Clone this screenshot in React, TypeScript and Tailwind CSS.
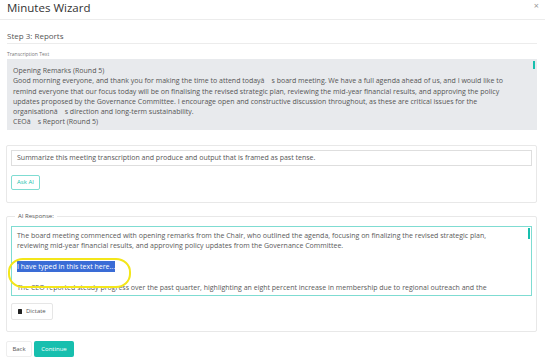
import React from "react";

const teal = "#17bfae";

const transcription = [
  "Opening Remarks (Round 5)",
  "Good morning everyone, and thank you for making the time to attend todayâ\u2003s board meeting. We have a full agenda ahead of us, and I would like to",
  "remind everyone that our focus today will be on finalising the revised strategic plan, reviewing the mid-year financial results, and approving the policy",
  "updates proposed by the Governance Committee. I encourage open and constructive discussion throughout, as these are critical issues for the",
  "organisationâ\u2003s direction and long-term sustainability.",
  "CEOâ\u2003s Report (Round 5)",
  "Thank you, Chair. Over the past quarter we have continued to make steady progress across our key priorities, and I am pleased to report that membership",
];

function Line({ children }: { children: React.ReactNode }) {
  return <div className="whitespace-nowrap">{children}</div>;
}

export default function App() {
  return (
    <div className="w-[545px] h-[364px] overflow-hidden bg-white text-[#555] font-['Open_Sans',sans-serif]">
      {/* modal header */}
      <div className="h-[20px] flex items-start justify-between border-b border-[#ececec] pl-[7px] pr-[6px]">
        <h1 className="text-[11.5px] leading-[14px] text-[#333] pt-[1px]">Minutes Wizard</h1>
        <span className="text-[9px] leading-[12px] text-[#999]">×</span>
      </div>

      <div className="pl-[6px] pr-[8px]">
        <div className="mt-[10px] ml-[1px] pb-[2px] border-b border-[#ececec] text-[8px] leading-[11px] text-[#555]">
          Step 3: Reports
        </div>

        <div className="mt-[7px] ml-[1px] text-[5px] leading-[7px] text-[#777]">Transcription Text</div>

        {/* transcription textarea */}
        <div className="relative ml-[1px] mt-[1px] h-[71px] overflow-hidden bg-[#e8eaed] pl-[6px] pt-[7px] text-[7px] leading-[10.3px] text-[#555]">
          {transcription.map((t, i) => (
            <Line key={i}>{t}</Line>
          ))}
          <div className="absolute right-[2px] top-[2px] w-[2px] h-[8px] bg-[#17bfae]" />
        </div>

        {/* prompt card */}
        <div className="mt-[15px] border border-[#e8e8e8] rounded-[2px] px-[4px] pt-[4px] pb-[12px]">
          <div className="h-[16px] border border-[#dedede] flex items-center px-[5px] text-[7px] text-[#555]">
            Summarize this meeting transcription and produce and output that is framed as past tense.
          </div>
          <button
            className="mt-[9px] h-[15px] w-[29px] border border-[#7fdcd2] rounded-[2px] text-[6px] flex items-center justify-center"
            style={{ color: teal }}
          >
            Ask AI
          </button>
        </div>

        {/* AI response */}
        <fieldset className="relative mt-[9px] border border-[#e8e8e8] rounded-[2px] px-[4px] pb-[11px]">
          <legend className="ml-[4px] px-[3px] text-[6px] leading-[8px] text-[#555]">AI Response:</legend>
          <div className="relative mt-[6px] h-[70px] overflow-hidden border border-[#7fdcd2] pl-[5px] pt-[4px] text-[7px] leading-[10.4px] text-[#5a5a5a]">
            <Line>
              The board meeting commenced with opening remarks from the Chair, who outlined the agenda, focusing on finalizing the revised strategic plan,
            </Line>
            <Line>reviewing mid-year financial results, and approving policy updates from the Governance Committee.</Line>
            <Line>&nbsp;</Line>
            <Line>
              <span className="bg-[#3a6cd6] text-white py-[1px]">I have typed in this text here...</span>
            </Line>
            <Line>&nbsp;</Line>
            <Line>
              The CEO reported steady progress over the past quarter, highlighting an eight percent increase in membership due to regional outreach and the
            </Line>
            <Line>
              successful relaunch of the member portal, while noting that operating costs had remained within budget for the reporting period and forecasts
            </Line>
            <div className="absolute right-[1px] top-[1px] w-[2px] h-[11px] bg-[#17bfae]" />
          </div>

          {/* annotation */}
          <div className="absolute left-[1px] top-[38px] w-[123px] h-[30px] rounded-[15px/14px] border-[2.5px] border-[#f3e61a]" />

          <button className="mt-[7px] h-[17px] px-[6px] border border-[#e6e6e6] rounded-[2px] flex items-center gap-[4px] text-[6px] text-[#555]">
            <span className="w-[4px] h-[5px] bg-[#222] rounded-[0.5px]" />
            Dictate
          </button>
        </fieldset>

        <div className="mt-[9px] flex gap-[2px]">
          <button className="h-[16px] w-[26px] border border-[#eee] rounded-[2px] text-[6px] text-[#555] flex items-center justify-center">
            Back
          </button>
          <button
            className="h-[16px] w-[40px] rounded-[2px] text-[6px] text-white flex items-center justify-center"
            style={{ background: teal }}
          >
            Continue
          </button>
        </div>
      </div>
    </div>
  );
}
